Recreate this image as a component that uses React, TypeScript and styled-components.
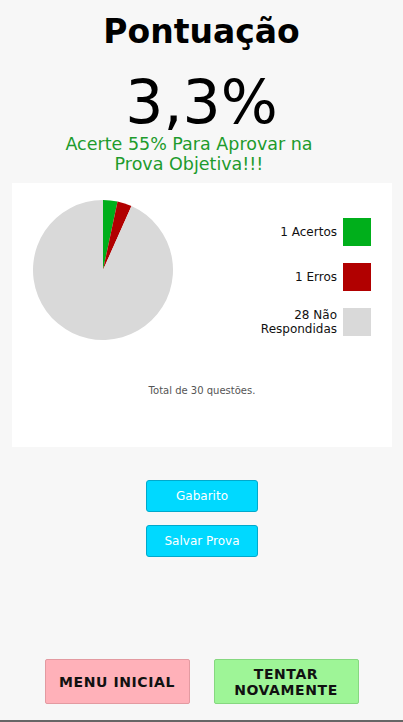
import styled, { createGlobalStyle } from "styled-components";

const GlobalStyle = createGlobalStyle`
  html, body {
    margin: 0;
    padding: 0;
    background: #f7f7f7;
    font-family: "DejaVu Sans", Verdana, sans-serif;
  }
`;

const TOTAL = 30;
const RESULTS = [
  { label: "1 Acertos", count: 1, color: "#00af1b" },
  { label: "1 Erros", count: 1, color: "#b10000" },
  { label: "28 Não Respondidas", count: 28, color: "#d9d9d9" },
];

function slicePath(start: number, end: number, r: number) {
  const a0 = (start / TOTAL) * Math.PI * 2;
  const a1 = (end / TOTAL) * Math.PI * 2;
  const x0 = r + r * Math.sin(a0);
  const y0 = r - r * Math.cos(a0);
  const x1 = r + r * Math.sin(a1);
  const y1 = r - r * Math.cos(a1);
  const large = a1 - a0 > Math.PI ? 1 : 0;
  return `M${r},${r} L${x0},${y0} A${r},${r} 0 ${large} 1 ${x1},${y1} Z`;
}

function PieChart() {
  let acc = 0;
  return (
    <svg width={140} height={140} viewBox="0 0 140 140">
      {RESULTS.map((s) => {
        const d = slicePath(acc, acc + s.count, 70);
        acc += s.count;
        return <path key={s.label} d={d} fill={s.color} />;
      })}
    </svg>
  );
}

function App() {
  return (
    <Page>
      <GlobalStyle />
      <Title>Pontuação</Title>
      <Score>3,3%</Score>
      <HintBox>
        <Hint>Acerte 55% Para Aprovar na Prova Objetiva!!!</Hint>
      </HintBox>
      <Card>
        <ChartRow>
          <PieChart />
          <Legend>
            {RESULTS.map((s) => (
              <LegendItem key={s.label}>
                <LegendLabel>{s.label}</LegendLabel>
                <Swatch color={s.color} />
              </LegendItem>
            ))}
          </Legend>
        </ChartRow>
        <Total>Total de {TOTAL} questões.</Total>
      </Card>
      <Actions>
        <SmallButton>Gabarito</SmallButton>
        <SmallButton>Salvar Prova</SmallButton>
      </Actions>
      <Spacer />
      <BottomRow>
        <BigButton bg="#ffb1b9" border="#e39aa1">MENU INICIAL</BigButton>
        <BigButton bg="#9ef597" border="#86d880">TENTAR NOVAMENTE</BigButton>
      </BottomRow>
    </Page>
  );
}

const Page = styled.div`
  display: flex;
  flex-direction: column;
  align-items: stretch;
  height: 720px;
  border-bottom: 2px solid #666;
`;

const Title = styled.h1`
  margin: 12px 0 0;
  font-size: 33px;
  line-height: 40px;
  font-weight: bold;
  text-align: center;
  color: #000;
`;

const Score = styled.div`
  margin-top: 18px;
  font-size: 60px;
  line-height: 64px;
  text-align: center;
  color: #000;
`;

const HintBox = styled.div`
  align-self: center;
  width: 292px;
  padding-right: 25px;
  box-sizing: border-box;
`;

const Hint = styled.div`
  font-size: 17.5px;
  line-height: 20px;
  text-align: center;
  color: #1d9b2c;
`;

const Card = styled.div`
  margin: 9px 11px 0 12px;
  height: 264px;
  box-sizing: border-box;
  padding: 17px 21px;
  background: #fff;
  display: flex;
  flex-direction: column;
`;

const ChartRow = styled.div`
  display: flex;
  justify-content: space-between;
  align-items: flex-start;
`;

const Legend = styled.div`
  margin-top: 18px;
  display: flex;
  flex-direction: column;
  gap: 17px;
`;

const LegendItem = styled.div`
  display: flex;
  align-items: center;
  justify-content: flex-end;
  gap: 6px;
`;

const LegendLabel = styled.span`
  max-width: 90px;
  font-size: 12px;
  line-height: 14px;
  text-align: right;
  color: #111;
`;

const Swatch = styled.span<{ color: string }>`
  width: 28px;
  height: 28px;
  flex-shrink: 0;
  background: ${(p) => p.color};
`;

const Total = styled.div`
  margin-top: 45px;
  font-size: 10px;
  line-height: 12px;
  text-align: center;
  color: #555;
`;

const Actions = styled.div`
  margin-top: 33px;
  display: flex;
  flex-direction: column;
  align-items: center;
  gap: 13px;
`;

const SmallButton = styled.button`
  width: 112px;
  height: 32px;
  margin-left: 1px;
  border: 1px solid #00a9cc;
  border-radius: 3px;
  background: #00d9ff;
  color: #fff;
  font-family: "DejaVu Sans", Verdana, sans-serif;
  font-size: 12px;
  cursor: pointer;
`;

const Spacer = styled.div`
  flex: 1;
`;

const BottomRow = styled.div`
  display: flex;
  justify-content: center;
  gap: 24px;
  margin-bottom: 16px;
`;

const BigButton = styled.button<{ bg: string; border: string }>`
  width: 145px;
  height: 45px;
  border: 1px solid ${(p) => p.border};
  border-radius: 2px;
  background: ${(p) => p.bg};
  color: #111;
  font-family: "DejaVu Sans", Verdana, sans-serif;
  font-size: 14px;
  font-weight: bold;
  letter-spacing: 0.6px;
  line-height: 16px;
  padding: 0 12px;
  cursor: pointer;
`;

export default App;
